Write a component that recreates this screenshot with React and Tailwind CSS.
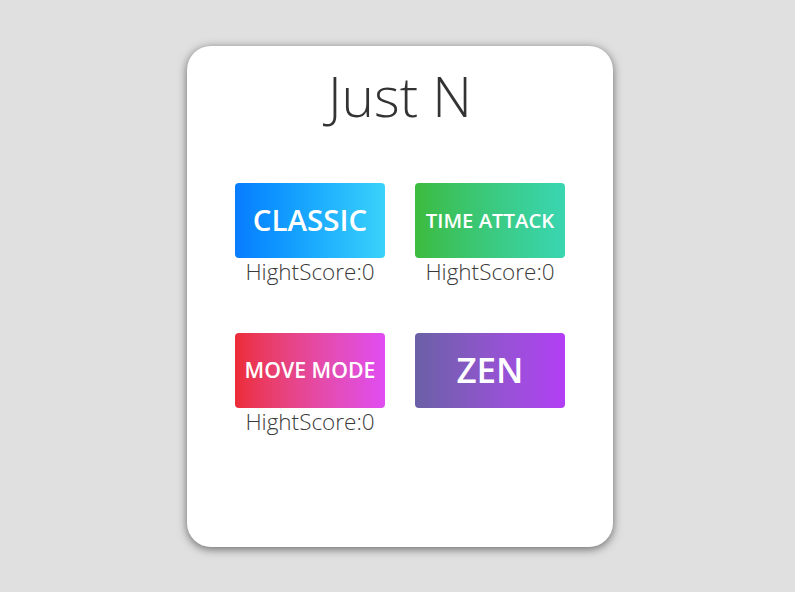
import React from 'react'

const modes = [
  { name: 'CLASSIC', size: 'text-[29.5px]', bg: 'bg-gradient-to-r from-[#0a7cff] to-[#3ad2fa]', score: true },
  { name: 'TIME ATTACK', size: 'text-[20.3px]', bg: 'bg-gradient-to-r from-[#3dbb3d] to-[#3ad6b2]', score: true },
  { name: 'MOVE MODE', size: 'text-[21.3px]', bg: 'bg-gradient-to-r from-[#ec2b36] to-[#e04cf2]', score: true },
  { name: 'ZEN', size: 'text-[35px]', bg: 'bg-gradient-to-r from-[#6a60a6] to-[#b33df5]', score: false },
]

const App = () => {
  return (
    <div className="flex h-[592px] w-full items-center justify-center bg-[#e0e0e0] font-['Open_Sans',sans-serif]">
      <div className="ml-[5px] flex h-[501px] w-[426px] flex-col items-center rounded-[24px] bg-white pt-[22px] shadow-[0_2px_10px_rgba(0,0,0,0.55)]">
        <h1 className="text-[55px] font-light leading-[56px] text-[#333]">Just N</h1>
        <div className="mt-[59px] grid grid-cols-[150px_150px] gap-x-[30px]">
          {modes.map(m => (
            <div key={m.name} className="flex h-[150px] flex-col items-center">
              <button className={`flex h-[75px] w-[150px] items-center justify-center rounded-[4px] ${m.bg}`}>
                <span className={`${m.size} font-semibold text-white`}>{m.name}</span>
              </button>
              {m.score && (
                <p className="mt-[3px] text-[22.5px] font-light leading-[22px] text-[#3a3a3a]">HightScore:0</p>
              )}
            </div>
          ))}
        </div>
      </div>
    </div>
  )
}

export default App
